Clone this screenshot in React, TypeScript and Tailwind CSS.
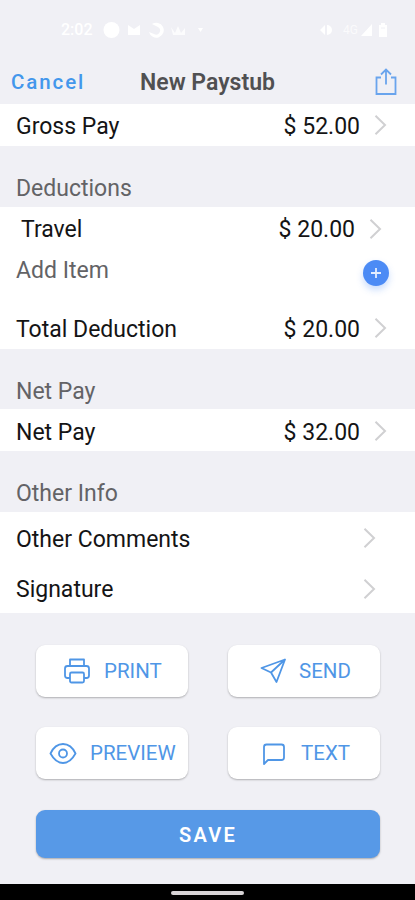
import type { ReactNode } from 'react';

function Chevron({ className = '' }: { className?: string }) {
  return (
    <svg width="14" height="22" viewBox="0 0 14 22" fill="none" stroke="#d0d0d2" strokeWidth="2" className={`shrink-0 ${className}`}>
      <path d="M1.500 1.800 11 11 1.500 20.200" />
    </svg>
  );
}

function Row({ label, amount, className }: { label: string; amount?: string; className: string }) {
  return (
    <div className={`flex items-center ${className}`}>
      <span className="flex-1 pt-[3px]">{label}</span>
      {amount && <span className="mr-[14px] pt-[3px]">{amount}</span>}
      <Chevron />
    </div>
  );
}

function SectionTitle({ children, className }: { children: ReactNode; className: string }) {
  return <h2 className={`flex items-center pl-4 text-[#636366] ${className}`}>{children}</h2>;
}

function ActionButton({ icon, label, className }: { icon: ReactNode; label: string; className: string }) {
  return (
    <button className={`flex h-[52px] items-center rounded-[9px] bg-white text-[20.500px] text-[#4f96e6] shadow-[0_1px_2px_rgba(0,0,0,0.28)] ${className}`}>
      {icon}
      <span>{label}</span>
    </button>
  );
}

function StatusBar() {
  return (
    <div className="flex h-[60px] items-center pl-[61px] pr-[26px] text-white">
      <span className="w-[42px] text-[16px] font-medium leading-none">2:02</span>
      <svg width="110" height="18" viewBox="0 0 110 18" fill="white">
        <circle cx="8.500" cy="9" r="8" />
        <path d="M25 4l6 4 6-4v10H25z" />
        <path d="M49 3a7.500 7.500 0 1 1-3 8l5 2a4 4 0 0 0 4-7z" />
        <path d="M68 6l4 6 3-7 3 7 4-5v7H70z" opacity=".8" />
        <path d="M95 7h5l-2.500 4z" />
      </svg>
      <svg className="ml-auto mr-2" width="16" height="14" viewBox="0 0 16 14" fill="white">
        <path d="M1 7l5-5v10zM8 2a5 5 0 0 1 0 10z" />
      </svg>
      <span className="w-[18px] text-[12px] leading-none opacity-70">4G</span>
      <svg width="28" height="14" viewBox="0 0 28 14" fill="white">
        <path d="M0 13 11 1v12zM18 2h2V0h4v2h2v12h-8z" />
        <path d="M20 5h4" stroke="#f0f0f5" />
      </svg>
    </div>
  );
}

export default function App() {
  return (
    <main className="flex h-[900px] w-[415px] flex-col overflow-hidden bg-[#f0f0f5] font-['Roboto',sans-serif] text-[23px] leading-[26px] text-[#141415]">
      <StatusBar />
      <header className="flex h-11 shrink-0 items-center pl-[11px] pr-[18px]">
        <button className="w-[129px] text-left text-[20.500px] font-medium tracking-[1.900px] text-[#4397ec]">Cancel</button>
        <h1 className="flex-1 pt-px text-[23px] font-semibold text-[#505052]">New Paystub</h1>
        <svg width="22" height="28" viewBox="0 0 22 28" fill="none" stroke="#69a4ed" strokeWidth="1.800">
          <path d="M6 9.500H1.500V26h19V9.500H16M11 16.500V2M6 6.500l5-5 5 5" />
        </svg>
      </header>

      <Row label="Gross Pay" amount="$ 52.00" className="h-[42px] bg-white pl-4 pr-[27px]" />

      <SectionTitle className="h-[61px] pt-6">Deductions</SectionTitle>
      <section className="flex h-[142px] flex-col bg-white">
        <Row label="Travel" amount="$ 20.00" className="h-[43px] pl-[21px] pr-8" />
        <div className="flex h-[42px] items-center justify-between pl-4 pr-[26px] text-[#636366]">
          <span>Add Item</span>
          <button aria-label="Add item" className="mt-1 flex size-[26px] items-center justify-center rounded-full bg-[#4c8bf5] shadow-[0_4px_7px_rgba(76,139,245,0.3)]">
            <svg width="10" height="10" viewBox="0 0 10 10" stroke="#e4eeff" strokeWidth="1.800">
              <path d="M5 0v10M0 5h10" />
            </svg>
          </button>
        </div>
        <Row label="Total Deduction" amount="$ 20.00" className="mt-auto h-[42px] pl-4 pr-[27px]" />
      </section>

      <SectionTitle className="h-[60px] pt-[25px]">Net Pay</SectionTitle>
      <Row label="Net Pay" amount="$ 32.00" className="h-[42px] bg-white pl-4 pr-[27px] pt-0.5" />

      <SectionTitle className="h-[61px] pt-[25px]">Other Info</SectionTitle>
      <section className="bg-white">
        <Row label="Other Comments" className="h-[51px] pl-4 pr-[38px] pt-px" />
        <Row label="Signature" className="h-[50px] pl-4 pr-[38px] pt-px" />
      </section>

      <div className="flex flex-1 flex-col pl-9 pr-[35px] pt-8">
        <div className="grid grid-cols-[152px_152px] justify-between gap-y-[30px]">
          <ActionButton
            label="PRINT"
            className="gap-[14px] pl-[28px]"
            icon={
              <svg width="26" height="26" viewBox="0 0 26 26" fill="none" stroke="currentColor" strokeWidth="1.800" strokeLinejoin="round">
                <path d="M6 8V1.500h14V8M6 20H3.500Q1 20 1 17.500v-7Q1 8 3.500 8h19Q25 8 25 10.500v7Q25 20 22.500 20H20" />
                <rect x="6" y="14.500" width="14" height="10" rx="1.500" />
              </svg>
            }
          />
          <ActionButton
            label="SEND"
            className="gap-[13px] pl-8"
            icon={
              <svg width="26" height="26" viewBox="0 0 26 26" fill="none" stroke="currentColor" strokeWidth="1.800" strokeLinejoin="round">
                <path d="M25 1.500 1.500 10 11 14.500l5.500 9.500zM25 1.500 11 14.500" />
              </svg>
            }
          />
          <ActionButton
            label="PREVIEW"
            className="gap-[13px] pl-[13px]"
            icon={
              <svg width="28" height="24" viewBox="0 0 28 24" fill="none" stroke="currentColor" strokeWidth="1.800">
                <path d="M1.500 12.500C4.500 6 8.500 3 14 3S23.500 6 26.500 12.500C23.500 18 19.500 22 14 22S4.500 18 1.500 12.500z" />
                <circle cx="14" cy="12.500" r="4" />
              </svg>
            }
          />
          <ActionButton
            label="TEXT"
            className="gap-[15px] pl-[34px]"
            icon={
              <svg width="24" height="24" viewBox="0 0 24 24" fill="none" stroke="currentColor" strokeWidth="1.800" strokeLinejoin="round">
                <path d="M2 23V6q0-2.500 2.500-2.500h15q2.500 0 2.500 2.500v10.500q0 2.500-2.500 2.500H6z" />
              </svg>
            }
          />
        </div>
        <button className="mt-[31px] h-12 rounded-[9px] bg-[#5799e7] pt-0.5 text-[20px] font-semibold tracking-[2.300px] text-white shadow-[0_1px_2px_rgba(0,0,0,0.3)]">SAVE</button>
      </div>

      <footer className="flex h-4 shrink-0 items-center justify-center bg-black pt-0.5">
        <div className="h-1 w-[73px] rounded-full bg-[#d8d4d6]" />
      </footer>
    </main>
  );
}
